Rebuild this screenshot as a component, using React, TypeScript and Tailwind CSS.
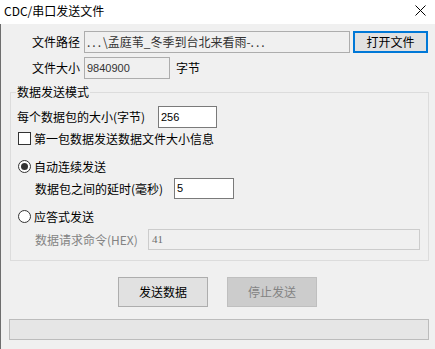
const font = { fontFamily: '"Noto Sans CJK SC", "Microsoft YaHei", sans-serif' };

const Checkbox = ({ label }: { label: string }) => (
  <div className="flex items-center h-[13px] ml-[1px]">
    <div className="w-[13px] h-[13px] border border-[#333333] bg-white shrink-0" />
    <span className="ml-[3px] leading-[14px]">{label}</span>
  </div>
);

const Radio = ({ label, checked }: { label: string; checked?: boolean }) => (
  <div className="flex items-center h-[13px] ml-[1px]">
    <div className="w-[13px] h-[13px] rounded-full border border-[#333333] bg-white shrink-0 flex items-center justify-center">
      {checked && <div className="w-[7px] h-[7px] rounded-full bg-[#333333]" />}
    </div>
    <span className="ml-[3px] leading-[14px]">{label}</span>
  </div>
);

export default function App() {
  return (
    <div
      className="w-[435px] h-[349px] bg-[#f0f0f0] text-[12px] text-black flex flex-col overflow-hidden"
      style={font}
    >
      {/* title bar */}
      <div className="h-[24px] bg-white flex items-center justify-between pl-[4px] pr-[9px] shrink-0">
        <span className="leading-[14px] mt-[-2px]">CDC/串口发送文件</span>
        <svg width="11" height="11" viewBox="0 0 11 11" className="mt-[-3px]">
          <path d="M0.5 0.5 L10.5 10.5 M10.5 0.5 L0.5 10.5" stroke="#000" strokeWidth="1" />
        </svg>
      </div>

      <div className="flex-1 border-l border-[#6e6e6e] pt-[7px]">
        {/* file path */}
        <div className="flex items-center pl-[31px] h-[22px]">
          <span className="w-[52px]">文件路径</span>
          <div className="w-[266px] h-[22px] border border-[#adadad] bg-[#f0f0f0] flex items-center pl-[2px] text-[#333]">
            <span className="tracking-[2px]">...</span>\孟庭苇_冬季到台北来看雨-<span className="tracking-[2px]">...</span>
          </div>
          <button className="ml-[3px] w-[75px] h-[22px] border-2 border-[#0078d7] bg-[#e1e1e1] flex items-center justify-center leading-none">
            打开文件
          </button>
        </div>

        {/* file size */}
        <div className="flex items-center pl-[31px] h-[22px] mt-[4px]">
          <span className="w-[52px]">文件大小</span>
          <div
            className="w-[86px] h-[22px] border border-[#adadad] bg-[#f0f0f0] flex items-center pl-[2px] text-[11px] text-[#333]"
            style={{ fontFamily: '"Liberation Sans", Arial, sans-serif' }}
          >
            9840900
          </div>
          <span className="ml-[6px]">字节</span>
        </div>

        {/* group box */}
        <div className="relative ml-[9px] w-[419px] mt-[13px] border border-[#dcdcdc] pl-[6px] pt-[13px] pb-[10px]">
          <span className="absolute top-[-8px] left-[5px] px-[1px] bg-[#f0f0f0] leading-[14px]">数据发送模式</span>

          <div className="flex items-center h-[22px]">
            <span className="w-[141px]">每个数据包的大小(字节)</span>
            <div
              className="w-[59px] h-[22px] border border-[#7a7a7a] bg-white flex items-center pl-[2px] text-[11px]"
              style={{ fontFamily: '"Liberation Sans", Arial, sans-serif' }}
            >
              256
            </div>
          </div>

          <div className="mt-[4px]">
            <Checkbox label="第一包数据发送数据文件大小信息" />
          </div>

          <div className="mt-[15px]">
            <Radio label="自动连续发送" checked />
          </div>

          <div className="flex items-center h-[21px] mt-[5px] pl-[18px]">
            <span className="w-[139px]">数据包之间的延时(毫秒)</span>
            <div
              className="w-[60px] h-[21px] border border-[#7a7a7a] bg-white flex items-center pl-[2px] text-[11px]"
              style={{ fontFamily: '"Liberation Sans", Arial, sans-serif' }}
            >
              5
            </div>
          </div>

          <div className="mt-[11px]">
            <Radio label="应答式发送" />
          </div>

          <div className="flex items-center h-[21px] mt-[6px] pl-[18px] text-[#838383]">
            <span className="w-[113px]">数据请求命令(HEX)</span>
            <div
              className="w-[272px] h-[21px] border border-[#cccccc] bg-[#f0f0f0] flex items-center pl-[3px] text-[11px] text-[#6d6d6d]"
              style={{ fontFamily: '"Liberation Serif", serif' }}
            >
              41
            </div>
          </div>
        </div>

        {/* buttons */}
        <div className="flex justify-center gap-[19px] mt-[16px] pr-[1px]">
          <button className="w-[90px] h-[30px] border border-[#adadad] bg-[#e1e1e1] flex items-center justify-center">
            发送数据
          </button>
          <button className="w-[90px] h-[30px] border border-[#bfbfbf] bg-[#cccccc] flex items-center justify-center text-[#838383]">
            停止发送
          </button>
        </div>

        {/* progress */}
        <div className="ml-[8px] w-[420px] h-[21px] mt-[12px] border border-[#bcbcbc] bg-[#e6e6e6]" />
      </div>
    </div>
  );
}
